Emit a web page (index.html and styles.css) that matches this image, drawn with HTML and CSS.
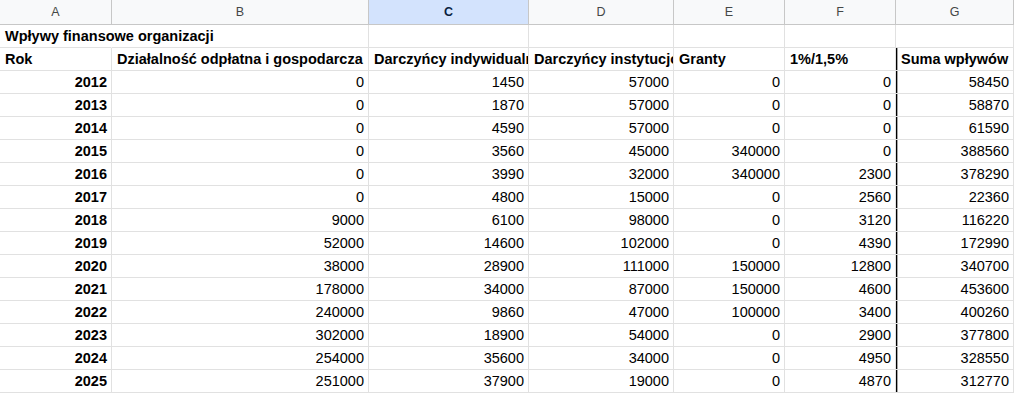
FILE: index.html
```html
<!DOCTYPE html>
<html lang="pl">
<head>
<meta charset="utf-8">
<title>Wpływy finansowe organizacji</title>
<link rel="stylesheet" href="styles.css">
</head>
<body>
<div class="sheet">
  <div class="ch">A</div><div class="ch">B</div><div class="ch sel">C</div><div class="ch">D</div><div class="ch">E</div><div class="ch">F</div><div class="ch">G</div>

  <div class="c b over">Wpływy finansowe organizacji</div><div class="c"></div><div class="c"></div><div class="c"></div><div class="c"></div><div class="c"></div><div class="c"></div>

  <div class="c b">Rok</div><div class="c b">Działalność odpłatna i gospodarcza</div><div class="c b">Darczyńcy indywidualni</div><div class="c b">Darczyńcy instytucjonalni</div><div class="c b">Granty</div><div class="c b">1%/1,5%</div><div class="c b g">Suma wpływów</div>

  <div class="c b n">2012</div><div class="c n">0</div><div class="c n">1450</div><div class="c n">57000</div><div class="c n">0</div><div class="c n">0</div><div class="c n g">58450</div>
  <div class="c b n">2013</div><div class="c n">0</div><div class="c n">1870</div><div class="c n">57000</div><div class="c n">0</div><div class="c n">0</div><div class="c n g">58870</div>
  <div class="c b n">2014</div><div class="c n">0</div><div class="c n">4590</div><div class="c n">57000</div><div class="c n">0</div><div class="c n">0</div><div class="c n g">61590</div>
  <div class="c b n">2015</div><div class="c n">0</div><div class="c n">3560</div><div class="c n">45000</div><div class="c n">340000</div><div class="c n">0</div><div class="c n g">388560</div>
  <div class="c b n">2016</div><div class="c n">0</div><div class="c n">3990</div><div class="c n">32000</div><div class="c n">340000</div><div class="c n">2300</div><div class="c n g">378290</div>
  <div class="c b n">2017</div><div class="c n">0</div><div class="c n">4800</div><div class="c n">15000</div><div class="c n">0</div><div class="c n">2560</div><div class="c n g">22360</div>
  <div class="c b n">2018</div><div class="c n">9000</div><div class="c n">6100</div><div class="c n">98000</div><div class="c n">0</div><div class="c n">3120</div><div class="c n g">116220</div>
  <div class="c b n">2019</div><div class="c n">52000</div><div class="c n">14600</div><div class="c n">102000</div><div class="c n">0</div><div class="c n">4390</div><div class="c n g">172990</div>
  <div class="c b n">2020</div><div class="c n">38000</div><div class="c n">28900</div><div class="c n">111000</div><div class="c n">150000</div><div class="c n">12800</div><div class="c n g">340700</div>
  <div class="c b n">2021</div><div class="c n">178000</div><div class="c n">34000</div><div class="c n">87000</div><div class="c n">150000</div><div class="c n">4600</div><div class="c n g">453600</div>
  <div class="c b n">2022</div><div class="c n">240000</div><div class="c n">9860</div><div class="c n">47000</div><div class="c n">100000</div><div class="c n">3400</div><div class="c n g">400260</div>
  <div class="c b n">2023</div><div class="c n">302000</div><div class="c n">18900</div><div class="c n">54000</div><div class="c n">0</div><div class="c n">2900</div><div class="c n g">377800</div>
  <div class="c b n">2024</div><div class="c n">254000</div><div class="c n">35600</div><div class="c n">34000</div><div class="c n">0</div><div class="c n">4950</div><div class="c n g">328550</div>
  <div class="c b n">2025</div><div class="c n">251000</div><div class="c n">37900</div><div class="c n">19000</div><div class="c n">0</div><div class="c n">4870</div><div class="c n g">312770</div>
</div>
</body>
</html>
```
FILE: styles.css
```css
html, body {
  margin: 0;
  padding: 0;
  background: #ffffff;
}

.sheet {
  display: grid;
  grid-template-columns: 112px 257px 160px 145px 111px 111px 118px;
  grid-auto-rows: 23px;
  grid-template-rows: 25px;
  font-family: "Liberation Sans", Arial, sans-serif;
  font-size: 14.5px;
  color: #000;
}

.ch {
  box-sizing: border-box;
  background: #f8f9fa;
  border-right: 1px solid #c7c7c7;
  border-bottom: 1px solid #c7c7c7;
  display: flex;
  align-items: center;
  justify-content: center;
  font-size: 12.5px;
  color: #444746;
}

.ch.sel {
  background: #d3e3fd;
  color: #0b1f3f;
  font-weight: bold;
}

.c {
  box-sizing: border-box;
  border-right: 1px solid #e1e1e1;
  border-bottom: 1px solid #e1e1e1;
  padding: 0 4px 0 5px;
  display: flex;
  align-items: center;
  white-space: nowrap;
  overflow: hidden;
  position: relative;
}

.c.over {
  overflow: visible;
  border-right-color: transparent;
  z-index: 1;
}

.b {
  font-weight: bold;
}

.n {
  justify-content: flex-end;
}

.g {
  box-shadow: inset 1px 0 0 #000, inset 2px 0 0 rgba(0, 0, 0, 0.35);
}
```
